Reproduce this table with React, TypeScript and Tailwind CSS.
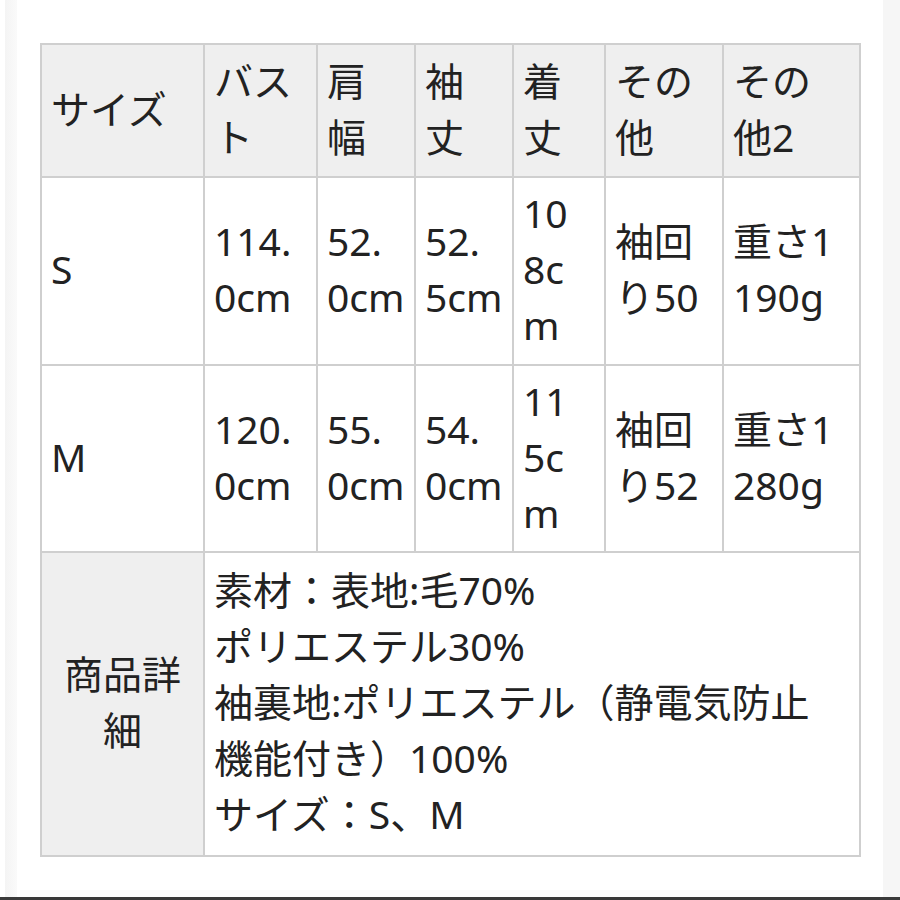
import React from "react";

const H = "bg-[#efefef]";

function Cell({
  lines,
  header,
  center,
  span,
}: {
  lines: string[];
  header?: boolean;
  center?: boolean;
  span?: boolean;
}) {
  return (
    <div
      className={`flex items-center border-r-2 border-b-2 border-[#cfcfcf] pl-[9px] pr-[9px] pb-[4px] ${
        header ? H : "bg-white"
      } ${center ? "justify-center text-center" : ""} ${span ? "col-span-6" : ""}`}
    >
      <div>
        {lines.map((l, i) => (
          <div key={i} className="whitespace-nowrap">
            {l}
          </div>
        ))}
      </div>
    </div>
  );
}

export default function App() {
  const head = [["サイズ"], ["バス", "ト"], ["肩", "幅"], ["袖", "丈"], ["着", "丈"], ["その", "他"], ["その", "他2"]];
  const rowS = [["S"], ["114.", "0cm"], ["52.", "0cm"], ["52.", "5cm"], ["10", "8c", "m"], ["袖回", "り50"], ["重さ1", "190g"]];
  const rowM = [["M"], ["120.", "0cm"], ["55.", "0cm"], ["54.", "0cm"], ["11", "5c", "m"], ["袖回", "り52"], ["重さ1", "280g"]];
  return (
    <div className="w-[900px] h-[900px] flex flex-col bg-white font-['Noto_Sans','Noto_Sans_CJK_JP',sans-serif] font-normal text-[39px] leading-[56px] text-[#222222]">
      <div className="flex flex-1">
        <div className="w-[5px]" />
        <div className="w-[12px] bg-gradient-to-r from-[#f4f4f4] to-[#fafafa]" />
        <div className="w-[866px] pt-[43px] pl-[23px]">
          <div className="grid w-[821px] grid-cols-[163px_113px_98px_98px_92px_118px_137px] grid-rows-[133px_188px_187px_304px] border-l-2 border-t-2 border-[#cfcfcf]">
            {head.map((l, i) => (
              <Cell key={"h" + i} lines={l} header />
            ))}
            {rowS.map((l, i) => (
              <Cell key={"s" + i} lines={l} />
            ))}
            {rowM.map((l, i) => (
              <Cell key={"m" + i} lines={l} />
            ))}
            <Cell lines={["商品詳", "細"]} header center />
            <Cell
              span
              lines={[
                "素材：表地:毛70%",
                "ポリエステル30%",
                "袖裏地:ポリエステル（静電気防止",
                "機能付き）100%",
                "サイズ：S、M",
              ]}
            />
          </div>
        </div>
        <div className="w-[17px] bg-[#f6f6f6]" />
      </div>
      <div className="h-[3px] bg-[#3a3a3a]" />
    </div>
  );
}
